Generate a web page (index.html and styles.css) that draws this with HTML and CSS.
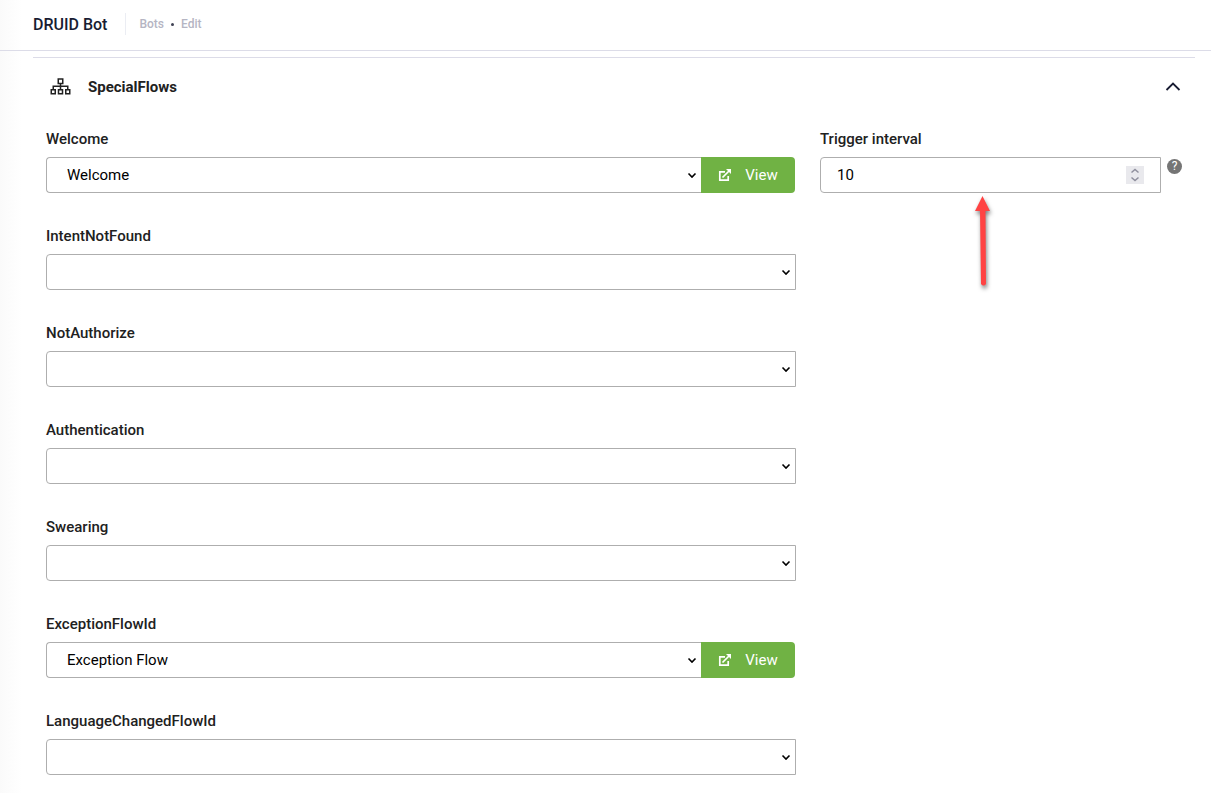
FILE: index.html
```html
<!DOCTYPE html>
<html lang="en">
<head>
    <meta charset="UTF-8">
    <meta name="viewport" content="width=device-width, initial-scale=1.0">
    <title>DRUID Bot</title>
    <link rel="stylesheet" href="styles.css">
</head>
<body>

    <header class="topbar">
        <h1>DRUID Bot</h1>
        <nav class="breadcrumb">
            <a href="#">Bots</a>
            <span class="dot"></span>
            <a href="#">Edit</a>
        </nav>
    </header>

    <main class="panel">
        <div class="panel-header">
            <svg class="sitemap" width="22" height="18" viewBox="0 0 22 18" fill="none" stroke="#212121" stroke-width="1.5">
                <path d="M8.250 1h4.500v4.500h-4.500zM1.250 11.750h4v4h-4zM8.500 11.750h4v4h-4zM15.750 11.750h4v4h-4zM10.500 5.500v6M3.250 11.500V8.250h14.500v3.250"/>
            </svg>
            <h2>SpecialFlows</h2>
            <button type="button" class="collapse" aria-label="Collapse">
                <svg width="16" height="10" viewBox="0 0 16 10" fill="none" stroke="#181c32" stroke-width="1.8">
                    <path d="M1.500 8L8 1.500 14.500 8"/>
                </svg>
            </button>
        </div>

        <form class="panel-body">
            <!-- Flows -->
            <div class="column">
                <div class="field">
                    <label for="welcome">Welcome</label>
                    <div class="input-group">
                        <select id="welcome"><option>Welcome</option></select>
                        <button type="button" class="view">
                            <svg width="14" height="14" viewBox="0 0 14 14" fill="none" stroke="#fff" stroke-width="1.7">
                                <path d="M7 3.800H1.800v8.400h8.400V8M4.500 9.500L11 3"/>
                                <path d="M8 1h5v5z" fill="#fff" stroke="none"/>
                            </svg>
                            View
                        </button>
                    </div>
                </div>
                <div class="field">
                    <label for="intentNotFound">IntentNotFound</label>
                    <select id="intentNotFound"><option></option></select>
                </div>
                <div class="field">
                    <label for="notAuthorize">NotAuthorize</label>
                    <select id="notAuthorize"><option></option></select>
                </div>
                <div class="field">
                    <label for="authentication">Authentication</label>
                    <select id="authentication"><option></option></select>
                </div>
                <div class="field">
                    <label for="swearing">Swearing</label>
                    <select id="swearing"><option></option></select>
                </div>
                <div class="field">
                    <label for="exceptionFlow">ExceptionFlowId</label>
                    <div class="input-group">
                        <select id="exceptionFlow"><option>Exception Flow</option></select>
                        <button type="button" class="view">
                            <svg width="14" height="14" viewBox="0 0 14 14" fill="none" stroke="#fff" stroke-width="1.7">
                                <path d="M7 3.800H1.800v8.400h8.400V8M4.500 9.500L11 3"/>
                                <path d="M8 1h5v5z" fill="#fff" stroke="none"/>
                            </svg>
                            View
                        </button>
                    </div>
                </div>
                <div class="field">
                    <label for="languageChanged">LanguageChangedFlowId</label>
                    <select id="languageChanged"><option></option></select>
                </div>
            </div>

            <!-- Trigger interval -->
            <div class="column">
                <div class="field">
                    <label for="interval">Trigger interval</label>
                    <div class="number-row">
                        <div class="number">
                            <input type="number" id="interval" value="10">
                            <svg class="spinner" width="18" height="18" viewBox="0 0 18 18" fill="none" stroke="#8f8f9d" stroke-width="1.5">
                                <path d="M0 0h18v18H0z" fill="#e9e9ed" stroke="none"/>
                                <path d="M5.500 6.500L9 3.500l3.500 3M5.500 11.500l3.500 3 3.500-3"/>
                            </svg>
                            <svg class="pointer" width="26" height="100" viewBox="0 0 26 100" fill="#ff4343">
                                <path d="M12.500 2L20 17h-4.500l.5 73q-2.500 3-5 0l-1-73H5z"/>
                            </svg>
                        </div>
                        <span class="help" title="Help">?</span>
                    </div>
                </div>
            </div>
        </form>
    </main>

</body>
</html>
```
FILE: styles.css
```css
* {
    box-sizing: border-box;
}
body {
    margin: 0;
    min-height: 100vh;
    font-family: Roboto, sans-serif;
    font-size: 15px;
    color: #212121;
    background: linear-gradient(to right, #fafafa, #fff 22px);
}
h1, h2 {
    margin: 0;
    font-weight: 500;
}
.topbar {
    display: flex;
    align-items: center;
    height: 51px;
    padding: 0 33px 2px;
    border-bottom: 1px solid #dcdce8;
}
.topbar h1 {
    font-size: 16px;
    color: #181c32;
}
.breadcrumb {
    display: flex;
    align-items: center;
    gap: 7px;
    height: 22px;
    margin-left: 18px;
    padding-left: 13px;
    border-left: 1px solid #ebedf3;
    font-size: 12px;
    font-weight: 500;
}
.breadcrumb a {
    color: #b5b5c3;
    text-decoration: none;
}
.dot {
    width: 3px;
    height: 3px;
    border-radius: 50%;
    background: #3f4254;
}
.panel {
    margin: 6px 16px 0 33px;
    border-top: 1px solid #dcdce8;
}
.panel-header {
    display: flex;
    align-items: center;
    height: 58px;
    padding: 0 14px 0 17px;
}
.panel-header h2 {
    margin-left: 16px;
    font-size: 15px;
    font-weight: 700;
}
.collapse {
    display: flex;
    margin-left: auto;
    padding: 0;
    border: 0;
    background: none;
    cursor: pointer;
}
.panel-body {
    display: grid;
    grid-template-columns: 750fr 362fr;
    gap: 24px;
    padding: 13px 13px 18px;
}
.column {
    display: flex;
    flex-direction: column;
    gap: 33px;
}
.field {
    display: flex;
    flex-direction: column;
}
label {
    height: 28px;
    line-height: 20px;
    font-weight: 500;
}
select, input {
    width: 100%;
    height: 36px;
    margin: 0;
    border: 1px solid #aeaeae;
    font: inherit;
    color: #000;
    background-color: #fff;
}
select {
    appearance: none;
    padding: 0 24px 0 20px;
    border-radius: 4px 0 0 4px;
    background-image: url("data:image/svg+xml,%3Csvg xmlns='http://www.w3.org/2000/svg' width='10' height='8' fill='none' stroke='%23000' stroke-width='1.6'%3E%3Cpath d='M1.500 2.500l3.500 3.500 3.500-3.500'/%3E%3C/svg%3E");
    background-repeat: no-repeat;
    background-position: right 4px center;
}
.input-group {
    display: flex;
    padding-right: 1px;
}
.input-group select {
    flex: 1;
    border-right: 0;
}
.view {
    display: flex;
    align-items: center;
    justify-content: center;
    gap: 13px;
    width: 94px;
    height: 36px;
    padding: 0;
    border: 0;
    border-radius: 0 4px 4px 0;
    background: #70b244;
    font: inherit;
    color: #fff;
    cursor: pointer;
}
.number-row {
    display: flex;
    gap: 6px;
}
.number {
    position: relative;
    flex: 1;
}
input {
    appearance: textfield;
    padding: 0 40px 0 16px;
    border-radius: 4px 0 0 4px;
}
input::-webkit-inner-spin-button {
    appearance: none;
    margin: 0;
}
.spinner {
    position: absolute;
    top: 9px;
    right: 17px;
}
/* arrow that points at the interval box */
.pointer {
    position: absolute;
    top: 37px;
    left: 44%;
    filter: drop-shadow(1px 3px 2px rgba(0, 0, 0, 0.5));
}
.help {
    width: 15px;
    height: 15px;
    margin-top: 2px;
    border-radius: 50%;
    background: #757575;
    font-size: 12px;
    line-height: 15px;
    text-align: center;
    color: #fff;
}
```
